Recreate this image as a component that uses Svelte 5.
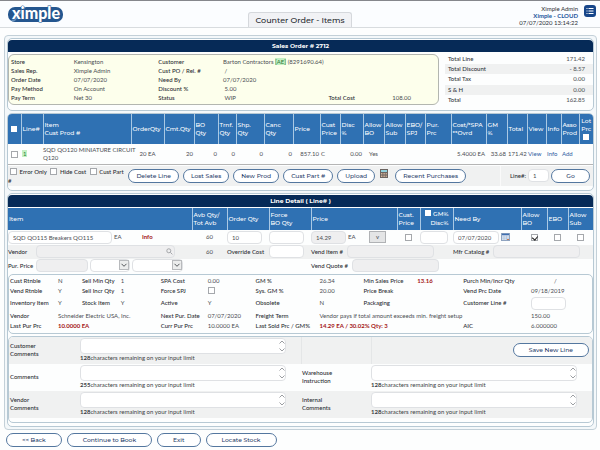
<script lang="ts">
	const orderRows = [
		['Store', 'Kensington', 'Customer', 'Barton Contractors', '', ''],
		['Sales Rep.', 'Ximple Admin', 'Cust PO / Rel. #', '\u00a0/', '', ''],
		['Order Date', '07/07/2020', 'Need By', '07/07/2020', '', ''],
		['Pay Method', 'On Account', 'Discount %', '\u00a05.00', '', ''],
		['Pay Term', 'Net 30', 'Status', '\u00a0WIP', 'Total Cost', '108.00']
	];

	const totals = [
		['Total Line', '171.42'],
		['Total Discount', '- 8.57'],
		['Total Tax', '0.00'],
		['S & H', '0.00'],
		['Total', '162.85']
	];

	// relative widths, turned into percentages for the colgroup
	const lineCols = [13, 22, 88, 33, 30, 24, 18, 28, 29, 27, 20, 23, 21, 21, 20, 26, 35, 21, 20, 19, 15, 18, 14];
	const lineHeads = [
		['Line#'],
		['Item', 'Cust Prod #'],
		['OrderQty'],
		['Cmt.Qty'],
		['BO', 'Qty'],
		['Trnf.', 'Qty'],
		['Shp.', 'Qty'],
		['Canc', 'Qty'],
		['Price'],
		['Cust', 'Price'],
		['Disc', '%'],
		['Allow', 'BO'],
		['Allow', 'Sub'],
		['EBO/', 'SPJ'],
		['Pur.', 'Prc'],
		['Cost/*SPA', '**Ovrd'],
		['GM', '%'],
		['Total'],
		['View'],
		['Info'],
		['Asso', 'Prod']
	];

	const detailCols = [184, 35, 42, 42, 86, 23, 33, 68, 26, 21, 25];

	// [grid column, text, kind, span]
	const info: Array<Array<[number, string, string, number]>> = [
		[
			[1, 'Cust Rtnble', 'label', 1], [2, 'N', '', 1], [3, 'Sell Min Qty', 'label', 1], [4, '1', '', 1],
			[5, 'SPA Cost', 'label', 1], [6, '0.00', '', 1], [7, 'GM %', 'label', 1], [8, '26.34', '', 1],
			[9, 'Min Sales Price', 'label', 1], [10, '13.16', 'red', 1], [11, 'Purch Min/Incr Qty', 'label', 1], [12, '/', 'slash', 1]
		],
		[
			[1, 'Vend Rtnble', 'label', 1], [2, 'Y', '', 1], [3, 'Sell Incr Qty', 'label', 1], [4, '1', '', 1],
			[5, 'Force SPJ', 'label', 1], [6, '', 'check', 1], [7, 'Sys. GM %', 'label', 1], [8, '20.00', '', 1],
			[9, 'Price Break', 'label', 1], [11, 'Vend Prc Date', 'label', 1], [12, '09/18/2019', '', 1]
		],
		[
			[1, 'Inventory Item', 'label', 1], [2, 'Y', '', 1], [3, 'Stock Item', 'label', 1], [4, 'Y', '', 1],
			[5, 'Active', 'label', 1], [6, 'Y', '', 1], [7, 'Obsolete', 'label', 1], [8, 'N', '', 1],
			[9, 'Packaging', 'label', 1], [11, 'Customer Line #', 'label', 1], [12, '', 'input', 1]
		],
		[
			[1, 'Vendor', 'label', 1], [2, 'Schneider Electric USA, Inc.', '', 3],
			[5, 'Next Pur. Date', 'label', 1], [6, '07/07/2020', '', 1],
			[7, 'Freight Term', 'label', 1], [8, 'Vendor pays if total amount exceeds min. freight setup', '', 4], [12, '150.00', '', 1]
		],
		[
			[1, 'Last Pur Prc', 'label', 1], [2, '10.0000 EA', 'red', 3],
			[5, 'Curr Pur Prc', 'label', 1], [6, '10.0000 EA', '', 1],
			[7, 'Last Sold Prc / GM%', 'label', 1], [8, '14.29 EA / 30.02% Qty: 3', 'red', 3],
			[11, 'AIC', 'label', 1], [12, '6.000000', '', 1]
		]
	];

	function share(cols: number[], width: number) {
		return (width / cols.reduce((a, b) => a + b, 0)) * 100;
	}
</script>

{#snippet comment(id: string, label: string, limit: number)}
	<label class="comment-label" for={id}>{label}</label>
	<div class="comment">
		<div class="area">
			<textarea {id}></textarea>
			<svg class="spin" viewBox="0 0 8 14" aria-hidden="true">
				<path d="M1.500 4.500 4 2l2.500 2.500M1.500 9.500 4 12l2.500-2.500" />
			</svg>
		</div>
		<div class="limit"><b>{limit}</b>characters remaining on your input limit</div>
	</div>
{/snippet}

{#snippet dropdown(label: string)}
	<span class="drop">
		<select aria-label={label}><option></option></select>
		<svg viewBox="0 0 10 10" aria-hidden="true">
			<rect x=".5" y=".5" width="9" height="9" />
			<path d="M2.500 3.800 5 6.300l2.500-2.500" />
		</svg>
	</span>
{/snippet}

<header>
	<svg class="logo" viewBox="0 0 56 20" role="img" aria-label="Ximple">
		<rect x="0" y="2" width="55" height="15" rx="7" fill="#24568f" />
		<path d="M3 16 15 2h3L7 16z" fill="#8db6da" opacity=".6" />
		<text x="28" y="14" text-anchor="middle">ximple</text>
	</svg>
	<h1>Counter Order - Items</h1>
	<div class="user">
		<div>
			<div>Ximple Admin</div>
			<div class="company">Ximple - CLOUD</div>
			<div>07/07/2020 13:14:22</div>
		</div>
		<button class="menu" aria-label="Menu">
			<svg viewBox="0 0 12 12" aria-hidden="true">
				<path d="M2.500 3.500h1M2.500 6h1M2.500 8.500h1M4.500 3.500h5M4.500 6h5M4.500 8.500h5" />
			</svg>
		</button>
	</div>
</header>

<main>
	<section class="panel">
		<h2>Sales Order # 2712</h2>
		<div class="summary">
			<div class="order">
				{#each orderRows as row, r}
					{#each row as cell, c}
						<span class:label={c % 2 === 0}>
							{cell}
							{#if r === 0 && c === 3}<mark>[AE]</mark> (8291690.64){/if}
						</span>
					{/each}
				{/each}
			</div>
			<table class="totals">
				<tbody>
					{#each totals as [name, amount]}
						<tr><th>{name}</th><td>{amount}</td></tr>
					{/each}
				</tbody>
			</table>
		</div>
	</section>

	<section class="panel lines">
		<table class="grid">
			<colgroup>
				{#each lineCols as w}<col style="width: {share(lineCols, w)}%" />{/each}
			</colgroup>
			<thead>
				<tr>
					<th class="mid"><input type="checkbox" aria-label="Select all" /></th>
					{#each lineHeads as head}
						<th>{#each head as part}<div>{part}</div>{/each}</th>
					{/each}
					<th class="mid">Lot<br />Prc<br /><input type="checkbox" aria-label="Lot price" /></th>
				</tr>
			</thead>
			<tbody>
				<tr>
					<td class="mid"><input type="checkbox" aria-label="Select line 1" /></td>
					<td><mark class="no">1</mark></td>
					<td class="item">SQD QO120 MINIATURE CIRCUIT<br />Q120</td>
					<td class="mid">20 EA</td>
					<td class="num">20</td>
					<td class="num">0</td>
					<td class="num">0</td>
					<td class="num">0</td>
					<td class="num">0</td>
					<td class="num">857.10</td>
					<td>C</td>
					<td class="num">0.00</td>
					<td class="mid">Yes</td>
					<td></td>
					<td></td>
					<td></td>
					<td class="num">5.4000 EA</td>
					<td class="num">33.68</td>
					<td class="num">171.42</td>
					<td><a href="#view">View</a></td>
					<td><a href="#info">Info</a></td>
					<td><a href="#add">Add</a></td>
					<td></td>
				</tr>
			</tbody>
		</table>
		<div class="toolbar">
			<div class="filters">
				<label><input type="checkbox" /> Error Only</label>
				<label><input type="checkbox" /> Hide Cost</label>
				<label><input type="checkbox" /> Cust Part #</label>
			</div>
			<button class="pill">Delete Line</button>
			<button class="pill">Lost Sales</button>
			<button class="pill">New Prod</button>
			<button class="pill">Cust Part #</button>
			<button class="pill">Upload</button>
			<svg class="calc" viewBox="0 0 8 9" aria-hidden="true">
				<rect width="8" height="9" fill="#6b6460" />
				<rect x="1" y="1" width="6" height="2" fill="#8fd0dd" />
				<path d="M1 4.500h6M1 6h6M1 7.500h6" stroke="#d8b49a" stroke-dasharray="1 .6" />
			</svg>
			<button class="pill">Recent Purchases</button>
			<div class="goto">
				<label for="goto">Line#:</label>
				<input id="goto" type="text" value="1" />
				<button class="pill go">Go</button>
			</div>
		</div>
	</section>

	<section class="panel">
		<h2>Line Detail ( Line# )</h2>
		<table class="grid detail">
			<colgroup>
				{#each detailCols as w}<col style="width: {share(detailCols, w)}%" />{/each}
			</colgroup>
			<thead>
				<tr>
					<th>Item</th>
					<th>Avb Qty/<br />Tot Avb</th>
					<th>Order Qty</th>
					<th>Force<br />BO Qty</th>
					<th>Price</th>
					<th>Cust.<br />Price</th>
					<th class="gm"><input type="checkbox" aria-label="GM%" /> GM%<br />Disc%</th>
					<th>Need By</th>
					<th>Allow<br />BO</th>
					<th>EBO</th>
					<th>Allow<br />Sub</th>
				</tr>
			</thead>
			<tbody>
				<tr>
					<td>
						<div class="field">
							<input class="product" type="text" aria-label="Item" value="SQD QO115 Breakers QO115" />
							<span class="unit">EA</span>
							<a class="red" href="#item-info">Info</a>
						</div>
					</td>
					<td class="mid">60</td>
					<td><input class="qty" type="text" aria-label="Order Qty" value="10" /></td>
					<td><input class="qty" type="text" aria-label="Force BO Qty" /></td>
					<td>
						<div class="field">
							<input class="qty off" type="text" aria-label="Price" value="14.29" readonly />
							<span class="unit">EA</span>
							<button class="more">v</button>
						</div>
					</td>
					<td class="mid"><input type="checkbox" aria-label="Cust. Price" /></td>
					<td><input class="pct" type="text" aria-label="Disc%" /></td>
					<td>
						<div class="field">
							<input class="date" type="text" aria-label="Need By" value="07/07/2020" />
							<svg class="cal" viewBox="0 0 9 8" aria-hidden="true">
								<rect x=".5" y=".5" width="8" height="7" fill="#dfe8f3" stroke="#8fa3bf" />
								<path d="M1 1.500h7" stroke="#3f6fb0" stroke-width="1.500" />
								<path d="M1 4h7M1 5.800h7M3 2.500v5M5.500 2.500v5" stroke="#9fb4d0" stroke-width=".5" />
								<path d="M6 6.500h2" stroke="#c77b52" />
							</svg>
						</div>
					</td>
					<td class="mid"><input type="checkbox" aria-label="Allow BO" checked /></td>
					<td class="mid"><input type="checkbox" aria-label="EBO" /></td>
					<td class="mid"><input type="checkbox" aria-label="Allow Sub" /></td>
				</tr>
				<tr>
					<td>
						<div class="field">
							<label for="vendor">Vendor</label>
							<span class="search">
								<input id="vendor" class="off" type="text" readonly />
								<svg viewBox="0 0 8 8" aria-hidden="true"><circle cx="3.200" cy="3.200" r="2.300" /><path d="m5 5 2.300 2.300" /></svg>
							</span>
						</div>
					</td>
					<td class="mid">60</td>
					<td><label for="override">Override Cost</label></td>
					<td><input id="override" class="qty" type="text" /></td>
					<td colspan="3">
						<div class="field">
							<label for="vend-item">Vend Item #</label>
							<input id="vend-item" class="off long" type="text" readonly />
						</div>
					</td>
					<td colspan="4">
						<div class="field">
							<label for="catalog">Mfr Catalog #</label>
							<input id="catalog" class="off long" type="text" readonly />
						</div>
					</td>
				</tr>
				<tr>
					<td colspan="4">
						<div class="field">
							<label for="pur-price">Pur. Price</label>
							<input id="pur-price" class="off price" type="text" readonly />
							{@render dropdown('Price unit')}
							<span class="wide">{@render dropdown('Price source')}</span>
						</div>
					</td>
					<td colspan="7">
						<div class="field">
							<label for="quote">Vend Quote #</label>
							<input id="quote" class="off long" type="text" readonly />
						</div>
					</td>
				</tr>
			</tbody>
		</table>

		<div class="info">
			{#each info as row, r}
				{#each row as [col, text, kind, span]}
					<div class={kind} style="grid-area: {r + 1} / {col} / auto / span {span}">
						{#if kind === 'check'}
							<input type="checkbox" aria-label="Force SPJ" />
						{:else if kind === 'input'}
							<input class="qty" type="text" aria-label="Customer Line #" />
						{:else}
							{text}
						{/if}
					</div>
				{/each}
			{/each}
		</div>

		<div class="comments">
			<div class="row">
				{@render comment('c-customer', 'Customer Comments', 128)}
				<span class="cell"></span>
				<div class="cell save"><button class="pill">Save New Line</button></div>
			</div>
			<div class="row">
				{@render comment('c-general', 'Comments', 255)}
				{@render comment('c-warehouse', 'Warehouse Instruction', 128)}
			</div>
			<div class="row">
				{@render comment('c-vendor', 'Vendor Comments', 128)}
				{@render comment('c-internal', 'Internal Comments', 128)}
			</div>
		</div>
	</section>
</main>

<footer>
	<button class="pill">&lt;&lt; Back</button>
	<button class="pill">Continue to Book</button>
	<button class="pill">Exit</button>
	<button class="pill">Locate Stock</button>
</footer>

<style>
	:global(body) {
		margin: 0;
		background: #fdfefe;
		color: #4a4d52;
		font: 6px/8px Lato, "Liberation Sans", sans-serif;
	}
	* {
		box-sizing: border-box;
	}
	input,
	button,
	select,
	textarea {
		font: inherit;
		color: inherit;
		margin: 0;
	}
	a {
		color: #2c5c9e;
		text-decoration: none;
	}
	label,
	.label {
		color: #2d3035;
		font-weight: 500;
	}
	mark {
		background: #c4f0c4;
		color: #2b7a35;
	}
	.no {
		padding: 0 1px;
	}
	.red {
		color: #a31515;
		font-weight: 700;
	}

	header {
		display: grid;
		grid-template-columns: 1fr auto 1fr;
		height: 28px;
		border-top: 1px solid #85878c;
		border-bottom: 1px solid #d8dcdf;
		background: #fbfdff;
	}
	.logo {
		width: 56px;
		height: 20px;
		margin: 4px 0 0 8px;
		overflow: visible;
	}
	.logo text {
		font: 900 16px Lato, sans-serif;
		fill: #fff;
		stroke: #24568f;
		stroke-width: 1px;
		paint-order: stroke;
	}
	h1 {
		align-self: end;
		margin: 0;
		padding: 0 7px;
		border: 1px solid #d5d8dc;
		border-bottom: 0;
		border-radius: 3px 3px 0 0;
		background: #f1f2f5;
		color: #26292e;
		font: 500 8px/14px Montserrat, Inter, sans-serif;
	}
	.user {
		display: flex;
		justify-content: flex-end;
		gap: 6px;
		padding: 4px 4px 0 0;
		color: #2d3035;
		line-height: 7px;
		text-align: right;
	}
	.company {
		color: #24559c;
		font-weight: 700;
	}
	.menu {
		width: 12px;
		height: 12px;
		padding: 0;
		border: 0;
		border-radius: 3px;
		background: #17468a;
	}
	.menu svg {
		display: block;
		stroke: #fff;
	}

	main {
		margin: 7px 3px 0 4px;
		padding: 2px;
		border: 1px solid #c3d0d8;
		border-radius: 4px;
		background: #f4f8fa;
	}
	.panel {
		padding: 1px 0 3px;
		border: 1px solid #b7c9d4;
		border-radius: 5px;
		background: #fdfefe;
	}
	.panel + .panel {
		margin-top: 2px;
	}
	.panel.lines {
		padding-top: 0;
	}
	h2 {
		margin: 0;
		border-radius: 4px 4px 0 0;
		background: #062a57;
		color: #fff;
		font: 700 6px/12px Montserrat, Inter, sans-serif;
		text-align: center;
	}

	.summary {
		display: grid;
		grid-template-columns: 431fr 154fr;
		margin: 2px 0;
	}
	.order {
		display: grid;
		grid-template-columns: 63fr 85fr 65fr 106fr 64fr 44fr;
		grid-auto-rows: 9px;
		align-items: center;
		padding: 2px;
		border: 1px solid #b3b6b0;
		border-radius: 6px;
		background: #fdffec;
		white-space: nowrap;
	}
	.order span {
		min-width: 0;
	}
	.totals {
		border-collapse: collapse;
		margin-left: 6px;
	}
	.totals th,
	.totals td {
		height: 10px;
		padding: 0 8px 0 3px;
		color: #33363b;
		font-weight: 500;
		text-align: left;
	}
	.totals td {
		color: #55585d;
		text-align: right;
	}
	.totals tr:nth-child(even) {
		background: #f0f1f1;
	}

	.grid {
		width: 100%;
		border-collapse: collapse;
		table-layout: fixed;
	}
	.grid th {
		height: 30px;
		padding: 0 1px;
		border-left: 1px solid #a9c8e4;
		background: #2f71b3;
		color: #fff;
		font: 500 6px/8px Montserrat, Inter, sans-serif;
		text-align: left;
		white-space: nowrap;
	}
	.grid th:first-child {
		border-left: 0;
	}
	.grid td {
		height: 20px;
		padding: 0 1px;
		white-space: nowrap;
	}
	.grid td.item {
		padding: 0;
	}
	.grid td.num {
		text-align: right;
	}
	.grid .mid {
		text-align: center;
	}
	.lines tbody tr {
		border-bottom: 1px solid #b5b5b5;
	}
	.lines thead th:first-child {
		border-top-left-radius: 4px;
	}
	.lines thead th:last-child {
		border-top-right-radius: 4px;
	}

	input[type='checkbox'] {
		appearance: none;
		position: relative;
		width: 7px;
		height: 7px;
		border: 1px solid #a5a8ac;
		background: #fff;
		vertical-align: middle;
	}
	th input[type='checkbox'] {
		width: 6px;
		height: 6px;
		border-color: #fff;
	}
	input[type='checkbox']:checked::after {
		content: '';
		position: absolute;
		left: 1px;
		top: 0;
		width: 3px;
		height: 4px;
		border: solid #222;
		border-width: 0 1px 1px 0;
		transform: rotate(40deg);
	}
	input[type='text'],
	select,
	textarea {
		height: 13px;
		min-width: 0;
		padding: 0 4px;
		border: 1px solid #dfe1e4;
		border-radius: 4px;
		background: #fff;
	}
	input.off {
		background: #efeff0;
	}

	.pill {
		height: 14px;
		padding: 0 7px;
		border: 1px solid #54779f;
		border-radius: 7px;
		background: #fff;
		color: #1f3c69;
		font: 500 6px/10px Montserrat, Inter, sans-serif;
		white-space: nowrap;
	}

	.toolbar {
		display: flex;
		align-items: center;
		gap: 4px;
		height: 20px;
		margin: 1px 0;
		padding-right: 3px;
		background: #f0f1f1;
	}
	.filters {
		width: 20%;
		flex: none;
		line-height: 9px;
	}
	.filters input {
		margin: 0 1px 0 2px;
	}
	.calc {
		width: 8px;
		height: 9px;
		margin: 0 3px 4px 1px;
	}
	.goto {
		display: flex;
		align-items: center;
		gap: 2px;
		height: 100%;
		margin-left: auto;
		padding-left: 9px;
		border-left: 1px solid #fafafa;
	}
	.goto input {
		width: 21px;
	}
	.go {
		width: 39px;
	}

	.detail {
		margin-top: 1px;
	}
	.detail th {
		height: 22px;
	}
	.detail th.gm {
		text-align: right;
		padding-right: 4px;
	}
	.gm input {
		margin-bottom: 3px;
	}
	.detail td {
		height: 14px;
		padding: 0;
	}
	.detail tbody tr:first-child td {
		height: 15px;
	}
	.detail tbody tr:nth-child(even) {
		background: #f0f1f1;
	}
	.detail input[type='text'],
	.detail select {
		display: block;
	}
	.field {
		display: flex;
		align-items: center;
		gap: 2px;
	}
	.product {
		width: 104px;
	}
	.unit {
		width: 19px;
	}
	.product + .unit {
		width: 26px;
	}
	.qty {
		width: 35px;
	}
	.pct {
		width: 28px;
	}
	.date {
		width: 46px;
	}
	.long {
		width: 87px;
		margin-left: 2px;
	}
	.price {
		width: 52px;
	}
	.more {
		width: 17px;
		height: 12px;
		padding: 0;
		border: 1px solid #b0b2b5;
		background: #e4e5e6;
		line-height: 8px;
	}
	.cal {
		width: 9px;
		height: 8px;
	}
	label[for='vendor'],
	label[for='pur-price'] {
		width: 26px;
	}
	.search {
		position: relative;
		width: 139px;
	}
	.search input {
		width: 100%;
	}
	.search svg {
		position: absolute;
		right: 2px;
		top: 3px;
		width: 7px;
		height: 7px;
		fill: none;
		stroke: #9a9da1;
	}
	.drop {
		display: block;
		position: relative;
		width: 40px;
	}
	.wide .drop {
		width: 51px;
	}
	.drop select {
		width: 100%;
		appearance: none;
	}
	.drop svg {
		position: absolute;
		right: 1px;
		top: 1px;
		width: 10px;
		height: 10px;
		fill: #eceded;
		stroke: #b8babd;
	}
	.drop path {
		fill: none;
		stroke: #55585c;
	}

	.info {
		display: grid;
		grid-template-columns: 48fr 24fr 39fr 40fr 47fr 48fr 64fr 44fr 54fr 46fr 68fr 60fr;
		grid-template-rows: 10px 10px 15px 10px 10px;
		align-items: center;
		margin-top: 1px;
		padding: 1px 1px 2px;
		border: 1px solid #b7c9d4;
		border-radius: 5px;
		white-space: nowrap;
	}
	.info .qty {
		display: block;
	}
	.slash {
		padding-left: 23px;
	}

	.comments {
		margin-top: 2px;
		padding-bottom: 4px;
		border: 1px solid #b7c9d4;
		border-radius: 5px;
		overflow: hidden;
	}
	.row {
		display: grid;
		grid-template-columns: 71fr 221fr 70fr 221fr;
		align-items: center;
		height: 27px;
	}
	.row:nth-child(odd) {
		background: #f0f1f1;
	}
	.comment-label {
		width: 36px;
		padding-left: 1px;
	}
	.comment {
		padding-right: 15px;
	}
	.area {
		position: relative;
	}
	.area textarea {
		display: block;
		width: 100%;
		height: 16px;
		resize: none;
	}
	.spin {
		position: absolute;
		right: 0;
		top: 1px;
		width: 8px;
		height: 14px;
		fill: none;
		stroke: #9b9ea2;
	}
	.limit {
		color: #3b3e43;
	}
	.cell {
		height: 100%;
		border-left: 1px solid #e4e6e7;
	}
	.save {
		display: flex;
		align-items: center;
		justify-content: flex-end;
		padding-right: 3px;
	}
	.save .pill {
		padding: 0 15px;
	}

	footer {
		display: flex;
		gap: 5px;
		padding: 3px 6px;
	}
	footer .pill {
		padding: 0 15px;
	}
</style>
